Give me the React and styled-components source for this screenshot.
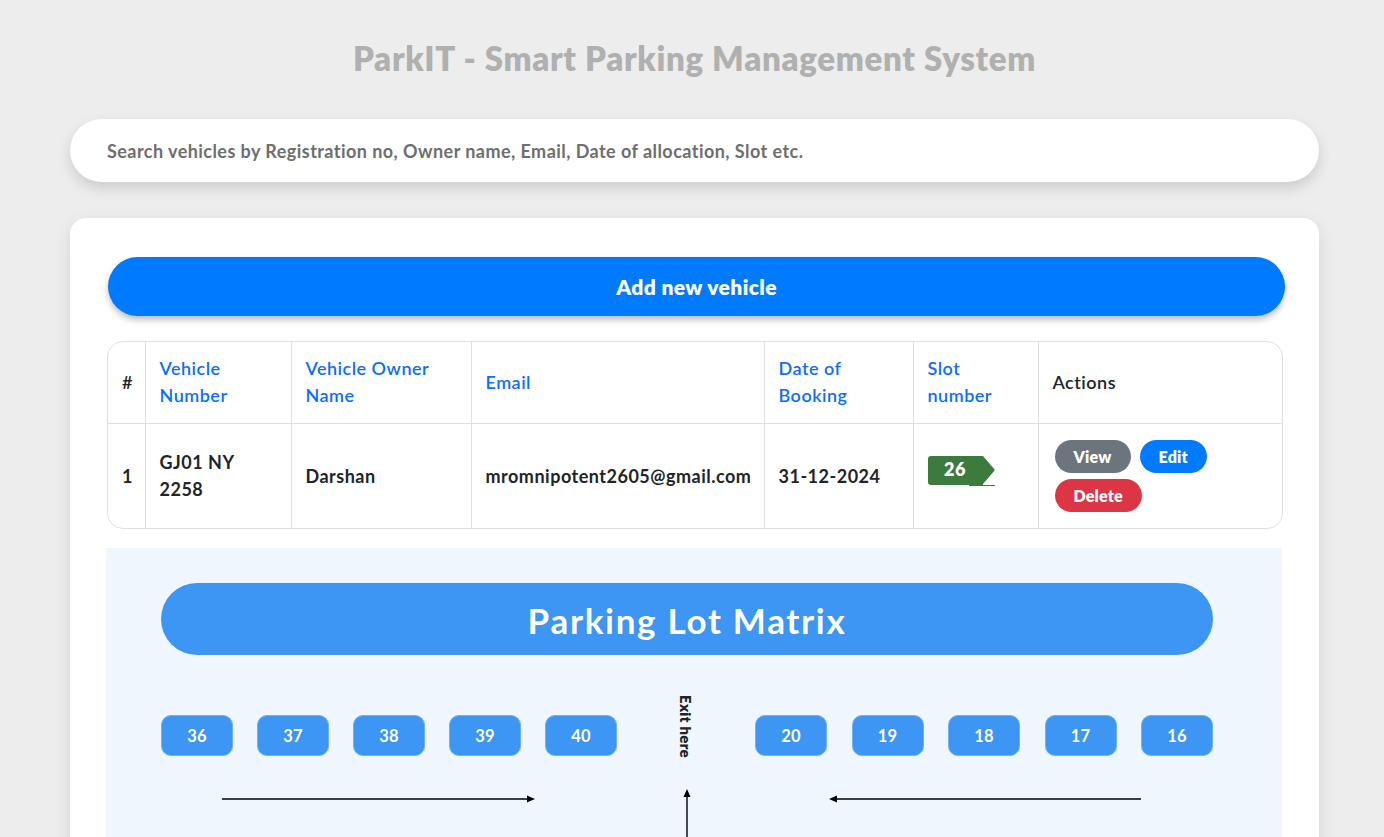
import React from "react";
import styled, { createGlobalStyle } from "styled-components";

const GlobalStyle = createGlobalStyle`
  html, body {
    margin: 0;
    padding: 0;
    background: #ededed;
    font-family: "Lato", "Noto Sans", sans-serif;
    overflow: hidden;
  }
`;

const vehicles = [
  {
    id: 1,
    number: "GJ01 NY 2258",
    owner: "Darshan",
    email: "mromnipotent2605@gmail.com",
    date: "31-12-2024",
    slot: 26,
  },
];

const leftSlots = [36, 37, 38, 39, 40];
const rightSlots = [20, 19, 18, 17, 16];

export default function App() {
  return (
    <Page>
      <GlobalStyle />
      <Title>ParkIT - Smart Parking Management System</Title>

      <SearchInput placeholder="Search vehicles by Registration no, Owner name, Email, Date of allocation, Slot etc." />

      <Card>
        <AddButton>Add new vehicle</AddButton>

        <TableWrap>
          <Table>
            <colgroup>
              <col style={{ width: 37 }} />
              <col style={{ width: 146 }} />
              <col style={{ width: 180 }} />
              <col style={{ width: 293 }} />
              <col style={{ width: 149 }} />
              <col style={{ width: 125 }} />
              <col />
            </colgroup>
            <thead>
              <tr>
                <Th>#</Th>
                <Th $link>Vehicle Number</Th>
                <Th $link>Vehicle Owner Name</Th>
                <Th $link>Email</Th>
                <Th $link>Date of Booking</Th>
                <Th $link>Slot number</Th>
                <Th>Actions</Th>
              </tr>
            </thead>
            <tbody>
              {vehicles.map((v) => (
                <tr key={v.id}>
                  <Td>{v.id}</Td>
                  <Td>{v.number}</Td>
                  <Td>{v.owner}</Td>
                  <Td>{v.email}</Td>
                  <Td>{v.date}</Td>
                  <Td>
                    <SlotTag>{v.slot}</SlotTag>
                  </Td>
                  <Td>
                    <Actions>
                      <ActionButton $color="#6c757d">View</ActionButton>
                      <ActionButton $color="#007bff">Edit</ActionButton>
                      <ActionButton $color="#dc3545">Delete</ActionButton>
                    </Actions>
                  </Td>
                </tr>
              ))}
            </tbody>
          </Table>
        </TableWrap>

        <Matrix>
          <MatrixHeader>Parking Lot Matrix</MatrixHeader>

          <SlotRow>
            <SlotGroup>
              {leftSlots.map((s) => (
                <Slot key={s}>{s}</Slot>
              ))}
            </SlotGroup>
            <Exit>Exit here</Exit>
            <SlotGroup $right>
              {rightSlots.map((s) => (
                <Slot key={s}>{s}</Slot>
              ))}
            </SlotGroup>
          </SlotRow>

          <ArrowRow>
            <HArrow width="313" height="10" viewBox="0 0 313 10">
              <line x1="0" y1="5" x2="305" y2="5" stroke="#000" strokeWidth="1.4" />
              <polygon points="305,1.5 313,5 305,8.5" fill="#000" />
            </HArrow>
            <VArrow width="10" height="60" viewBox="0 0 10 60">
              <line x1="5" y1="8" x2="5" y2="60" stroke="#000" strokeWidth="1.4" />
              <polygon points="1.5,8 5,0 8.5,8" fill="#000" />
            </VArrow>
            <HArrow width="312" height="10" viewBox="0 0 312 10">
              <line x1="8" y1="5" x2="312" y2="5" stroke="#000" strokeWidth="1.4" />
              <polygon points="8,1.5 0,5 8,8.5" fill="#000" />
            </HArrow>
          </ArrowRow>
        </Matrix>
      </Card>
    </Page>
  );
}

const Page = styled.div`
  width: 1249px;
  padding: 40px 0 0 70px;
`;

const Title = styled.h1`
  margin: 0 0 43px;
  text-align: center;
  font-size: 33px;
  line-height: 36px;
  letter-spacing: 0.7px;
  font-weight: 800;
  color: #b0b0b0;
`;

const SearchInput = styled.input`
  display: block;
  box-sizing: border-box;
  width: 100%;
  height: 63px;
  margin: 0 0 36px;
  padding: 0 37px;
  border: none;
  border-radius: 32px;
  background: #fff;
  box-shadow: 0 6px 14px rgba(0, 0, 0, 0.14);
  font-family: inherit;
  font-size: 18px;
  letter-spacing: 0.45px;
  font-weight: 700;
  outline: none;

  &::placeholder {
    color: #6e6e6e;
  }
`;

const Card = styled.div`
  box-sizing: border-box;
  background: #fff;
  border-radius: 16px;
  padding: 39px 37px 0 36px;
  height: 700px;
  box-shadow: 0 6px 18px rgba(0, 0, 0, 0.1);
`;

const AddButton = styled.button`
  display: block;
  width: 1177px;
  height: 59px;
  margin: 0 0 25px 2px;
  border: none;
  border-radius: 30px;
  background: #007bff;
  color: #fff;
  font-family: inherit;
  font-size: 21px;
  letter-spacing: 0.4px;
  font-weight: 800;
  box-shadow: 0 4px 6px rgba(0, 0, 0, 0.25);
`;

const TableWrap = styled.div`
  box-sizing: border-box;
  width: 1176px;
  margin: 0 0 19px 1px;
  border: 1px solid #dee2e6;
  border-radius: 16px;
  overflow: hidden;
`;

const Table = styled.table`
  width: 100%;
  border-collapse: collapse;
  table-layout: fixed;
  font-size: 18px;
  letter-spacing: 0.5px;
  line-height: 27px;

  tbody td {
    border-top: 1px solid #dee2e6;
  }
`;

const Th = styled.th`
  text-align: left;
  padding: 13px 14px 14px;
  font-weight: 600;
  color: ${(p) => (p.$link ? "#0d6efd" : "#212529")};
  border-left: 1px solid #dee2e6;
  vertical-align: middle;

  &:first-child {
    border-left: none;
    padding-right: 0;
  }
`;

const Td = styled.td`
  padding: 12px 14px;
  font-weight: 700;
  color: #212529;
  border-left: 1px solid #dee2e6;
  vertical-align: middle;
  height: 80px;

  &:first-child {
    border-left: none;
    padding-right: 0;
  }
`;

const SlotTag = styled.span`
  position: relative;
  display: block;
  width: 55px;
  height: 29px;
  margin-bottom: 12px;
  line-height: 27px;
  text-align: center;
  background: #3d7a3d;
  color: #fff;
  font-size: 18px;
  font-weight: 800;
  border-radius: 3px 0 0 3px;

  &::after {
    content: "";
    position: absolute;
    right: -12px;
    top: 0;
    border-top: 14.5px solid transparent;
    border-bottom: 14.5px solid transparent;
    border-left: 12px solid #3d7a3d;
  }

  &::before {
    content: "";
    position: absolute;
    right: -12px;
    bottom: -1px;
    width: 26px;
    height: 1px;
    background: #3d7a3d;
  }
`;

const Actions = styled.div`
  display: flex;
  flex-wrap: wrap;
  gap: 6px 9px;
  width: 160px;
  margin-left: 2px;
`;

const ActionButton = styled.button`
  height: 33px;
  padding: 0 19px;
  border: none;
  border-radius: 17px;
  background: ${(p) => p.$color};
  color: #fff;
  font-family: inherit;
  font-size: 16px;
  letter-spacing: 0.2px;
  font-weight: 800;
`;

const Matrix = styled.div`
  background: #f0f6fe;
  width: 1176px;
  height: 300px;
  box-sizing: border-box;
  padding: 35px 69px 0 55px;
`;

const MatrixHeader = styled.div`
  height: 72px;
  border-radius: 36px;
  background: #3d95f4;
  color: #fff;
  display: flex;
  align-items: center;
  justify-content: center;
  padding-top: 2px;
  box-sizing: border-box;
  font-size: 35px;
  font-weight: 700;
  letter-spacing: 1.7px;
  margin-bottom: 40px;
`;

const SlotRow = styled.div`
  display: flex;
  justify-content: space-between;
  align-items: flex-start;
`;

const SlotGroup = styled.div`
  display: flex;
  gap: ${(p) => (p.$right ? "24.5px" : "24px")};
  padding-top: 20px;
`;

const Slot = styled.div`
  box-sizing: border-box;
  width: 72px;
  height: 41px;
  border-radius: 10px;
  background: #3d95f4;
  border: 1px solid #6fb0f7;
  color: #fff;
  display: flex;
  align-items: center;
  justify-content: center;
  font-size: 16.5px;
  font-weight: 700;
  letter-spacing: 0.3px;
`;

const Exit = styled.div`
  writing-mode: vertical-rl;
  font-size: 15px;
  font-weight: 800;
  letter-spacing: 0.3px;
  color: #222;
  height: 65px;
  line-height: 20px;
`;

const ArrowRow = styled.div`
  display: flex;
  align-items: flex-start;
  padding: 29px 0 0 61px;
`;

const HArrow = styled.svg`
  display: block;
  margin-top: 5px;
`;

const VArrow = styled.svg`
  display: block;
  margin: 0 137px 0 147px;
`;
